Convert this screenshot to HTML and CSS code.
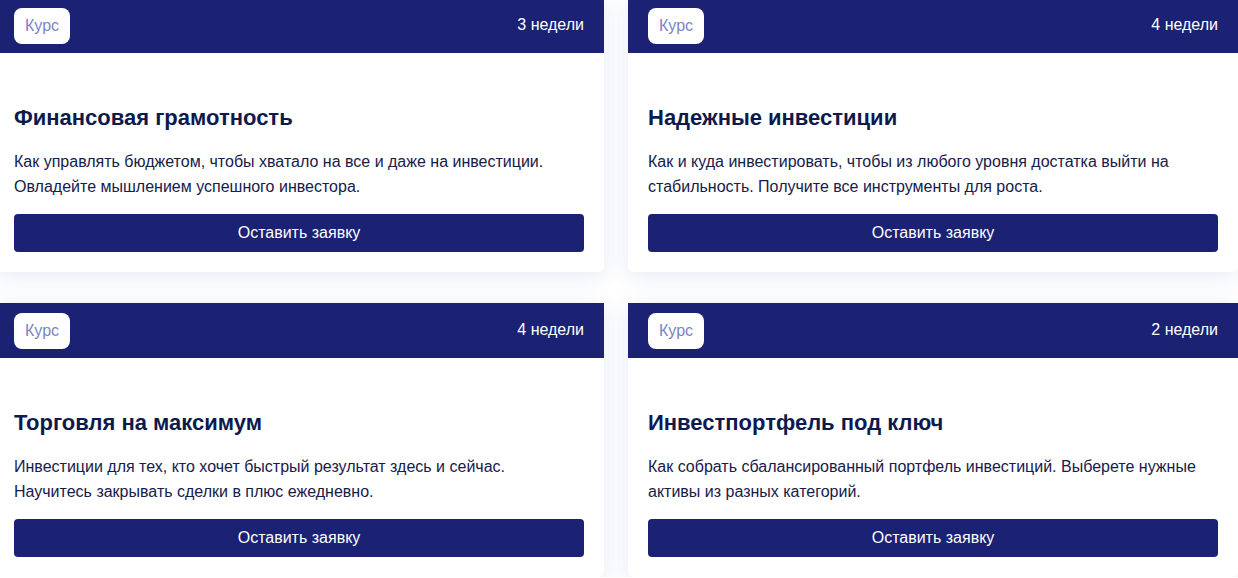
FILE: index.html
```html
<!DOCTYPE html>
<html lang="ru">

<head>
    <meta charset="UTF-8">
    <meta name="viewport" content="width=device-width, initial-scale=1.0">
    <title>Курсы</title>
    <link rel="stylesheet" href="styles.css">
</head>

<body>
    <div class="courses">
        <div class="course">
            <div class="course-head">
                <span class="badge">Курс</span>
                <span class="weeks">3 недели</span>
            </div>
            <div class="course-body">
                <h2 class="course-title">Финансовая грамотность</h2>
                <p class="course-text">Как управлять бюджетом, чтобы хватало на все и даже на инвестиции. Овладейте мышлением успешного инвестора.</p>
                <button class="course-btn">Оставить заявку</button>
            </div>
        </div>
        <div class="course">
            <div class="course-head">
                <span class="badge">Курс</span>
                <span class="weeks">4 недели</span>
            </div>
            <div class="course-body">
                <h2 class="course-title">Надежные инвестиции</h2>
                <p class="course-text">Как и куда инвестировать, чтобы из любого уровня достатка выйти на стабильность. Получите все инструменты для роста.</p>
                <button class="course-btn">Оставить заявку</button>
            </div>
        </div>
        <div class="course">
            <div class="course-head">
                <span class="badge">Курс</span>
                <span class="weeks">4 недели</span>
            </div>
            <div class="course-body">
                <h2 class="course-title">Торговля на максимум</h2>
                <p class="course-text">Инвестиции для тех, кто хочет быстрый результат здесь и сейчас. Научитесь закрывать сделки в плюс ежедневно.</p>
                <button class="course-btn">Оставить заявку</button>
            </div>
        </div>
        <div class="course">
            <div class="course-head">
                <span class="badge">Курс</span>
                <span class="weeks">2 недели</span>
            </div>
            <div class="course-body">
                <h2 class="course-title">Инвестпортфель под ключ</h2>
                <p class="course-text">Как собрать сбалансированный портфель инвестиций. Выберете нужные активы из разных категорий.</p>
                <button class="course-btn">Оставить заявку</button>
            </div>
        </div>
    </div>
</body>

</html>
```

FILE: styles.css
```css
* {
    padding: 0;
    margin: 0;
    box-sizing: border-box;
}

body {
    background-color: #ffffff;
    font-family: "Liberation Sans", Arial, sans-serif;
    overflow: hidden;
}

.courses {
    display: grid;
    grid-template-columns: 610px 610px;
    column-gap: 24px;
    row-gap: 31px;
    margin: -2px 0 0 -6px;
}

.course {
    height: 274px;
    background-color: #fff;
    border-radius: 0 0 6px 6px;
    box-shadow: 0 4px 22px rgba(40, 70, 160, 0.12);
    display: flex;
    flex-direction: column;
}

.course-head {
    height: 55px;
    background-color: #1b2173;
    padding: 0 20px;
    display: flex;
    justify-content: space-between;
    align-items: center;
}

.badge {
    height: 36px;
    padding: 0 11px;
    background-color: #fff;
    border-radius: 8px;
    color: #7c84c6;
    font-size: 16px;
    display: flex;
    align-items: center;
}

.weeks {
    color: #fff;
    font-size: 16px;
    margin-top: -2px;
}

.course-body {
    flex: 1;
    padding: 52px 20px 20px;
    display: flex;
    flex-direction: column;
}

.course-title {
    color: #0e1a4d;
    font-size: 22px;
    font-weight: bold;
    line-height: 26px;
}

.course-text {
    color: #16204a;
    font-size: 16px;
    line-height: 25px;
    margin-top: 18px;
}

.course-btn {
    margin-top: auto;
    height: 38px;
    width: 100%;
    border: none;
    border-radius: 4px;
    background-color: #1b2173;
    color: #fff;
    font-family: inherit;
    font-size: 16px;
    cursor: pointer;
}
```
